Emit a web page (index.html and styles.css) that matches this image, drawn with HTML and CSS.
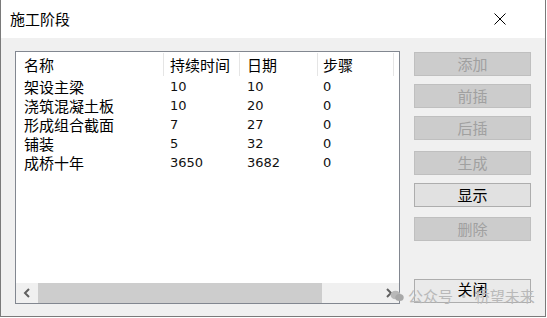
FILE: index.html
```html
<!DOCTYPE html>
<html lang="zh-CN">
<head>
    <meta charset="UTF-8">
    <title>施工阶段</title>
    <link rel="stylesheet" href="styles.css">
</head>
<body>
    <div class="dialog">
        <div class="titlebar">
            <span class="title">施工阶段</span>
            <svg class="close-x" width="12" height="12" viewBox="0 0 12 12">
                <path d="M0.5 0.5 L11.5 11.5 M11.5 0.5 L0.5 11.5" stroke="#000" stroke-width="1" fill="none"/>
            </svg>
        </div>

        <div class="content">
            <div class="listbox">
                <div class="list-head">
                    <div class="cell c1">名称</div>
                    <div class="cell c2">持续时间</div>
                    <div class="cell c3">日期</div>
                    <div class="cell c4">步骤</div>
                </div>
                <div class="list-body">
                    <div class="row"><div class="cell c1">架设主梁</div><div class="cell c2 num">10</div><div class="cell c3 num">10</div><div class="cell c4 num">0</div></div>
                    <div class="row"><div class="cell c1">浇筑混凝土板</div><div class="cell c2 num">10</div><div class="cell c3 num">20</div><div class="cell c4 num">0</div></div>
                    <div class="row"><div class="cell c1">形成组合截面</div><div class="cell c2 num">7</div><div class="cell c3 num">27</div><div class="cell c4 num">0</div></div>
                    <div class="row"><div class="cell c1">铺装</div><div class="cell c2 num">5</div><div class="cell c3 num">32</div><div class="cell c4 num">0</div></div>
                    <div class="row"><div class="cell c1">成桥十年</div><div class="cell c2 num">3650</div><div class="cell c3 num">3682</div><div class="cell c4 num">0</div></div>
                </div>
                <div class="hscroll">
                    <div class="arrow">
                        <svg width="8" height="10" viewBox="0 0 8 10"><path d="M6 1 L2 5 L6 9" stroke="#606060" stroke-width="2" fill="none"/></svg>
                    </div>
                    <div class="track"><div class="thumb"></div></div>
                    <div class="arrow">
                        <svg width="8" height="10" viewBox="0 0 8 10"><path d="M2 1 L6 5 L2 9" stroke="#606060" stroke-width="2" fill="none"/></svg>
                    </div>
                </div>
            </div>

            <div class="buttons">
                <button class="btn disabled b-add">添加</button>
                <button class="btn disabled b-before">前插</button>
                <button class="btn disabled b-after">后插</button>
                <button class="btn disabled b-gen">生成</button>
                <button class="btn b-show">显示</button>
                <button class="btn disabled b-del">删除</button>
                <button class="btn b-close">关闭</button>
            </div>
        </div>

        <div class="watermark">
            <svg width="14" height="12" viewBox="0 0 14 12">
                <ellipse cx="5.5" cy="5" rx="5" ry="4.2" fill="#b8b8b8"/>
                <ellipse cx="9.5" cy="7.5" rx="4.2" ry="3.6" fill="#a8a8a8"/>
            </svg>
            <span>公众号 · 桥望未来</span>
        </div>
    </div>
</body>
</html>
```

FILE: styles.css
```css
* {
    margin: 0;
    padding: 0;
    box-sizing: border-box;
}

body {
    background: #fff;
    font-family: "Noto Sans CJK SC", "Noto Sans", sans-serif;
    font-size: 15px;
    color: #000;
    overflow: hidden;
}

.dialog {
    position: relative;
    width: 546px;
    height: 317px;
    border: 1px solid #7a7a7a;
    border-top: none;
    background: #f0f0f0;
    display: flex;
    flex-direction: column;
}

.titlebar {
    height: 38px;
    background: #fff;
    display: flex;
    align-items: center;
    justify-content: space-between;
    padding: 0 39px 0 9px;
}

.title {
    font-size: 15px;
    line-height: 20px;
}

.close-x {
    display: block;
}

.content {
    flex: 1;
    display: flex;
    padding: 13px 0 0 14px;
}

/* list view */
.listbox {
    width: 385px;
    height: 253px;
    border: 1px solid #828790;
    background: #fff;
    display: flex;
    flex-direction: column;
}

.list-head,
.row {
    display: flex;
}

.list-head {
    height: 25px;
    align-items: center;
}

.list-head .cell {
    height: 23px;
    line-height: 23px;
    border-right: 1px solid #e5e5e5;
}

.list-body {
    flex: 1;
}

.row {
    height: 19px;
    line-height: 19px;
}

.cell {
    white-space: nowrap;
}

.c1 { width: 148px; padding-left: 8px; }
.c2 { width: 76px; padding-left: 6px; }
.c3 { width: 78px; padding-left: 7px; }
.c4 { width: 76px; padding-left: 5px; }

.num {
    font-family: "DejaVu Sans", sans-serif;
    font-size: 13px;
    color: #111;
}

.hscroll {
    height: 20px;
    display: flex;
    background: #f0f0f0;
}

.arrow {
    width: 21px;
    display: flex;
    align-items: center;
    justify-content: center;
}

.track {
    flex: 1;
    padding: 0 56px 0 1px;
}

.thumb {
    height: 100%;
    background: #cdcdcd;
}

/* buttons */
.buttons {
    margin-left: 14px;
    width: 117px;
    display: flex;
    flex-direction: column;
}

.btn {
    height: 24px;
    font-family: inherit;
    font-size: 15px;
    line-height: 20px;
    border: 1px solid #adadad;
    background: #e1e1e1;
    color: #000;
}

.btn.disabled {
    background: #cccccc;
    border-color: #bfbfbf;
    color: #a0a0a0;
}

.b-add { margin-top: 1px; }
.b-before { margin-top: 8px; }
.b-after { margin-top: 8px; }
.b-gen { margin-top: 11px; }
.b-show { margin-top: 8px; }
.b-del { margin-top: 10px; }
.b-close {
    margin-top: 38px;
    background: #eaeaea;
    line-height: 16px;
    padding-bottom: 4px;
}

.watermark {
    position: absolute;
    left: 389px;
    top: 286px;
    display: flex;
    align-items: center;
    gap: 4px;
    color: #b9b9b9;
    font-size: 15px;
    line-height: 20px;
    pointer-events: none;
}
```
